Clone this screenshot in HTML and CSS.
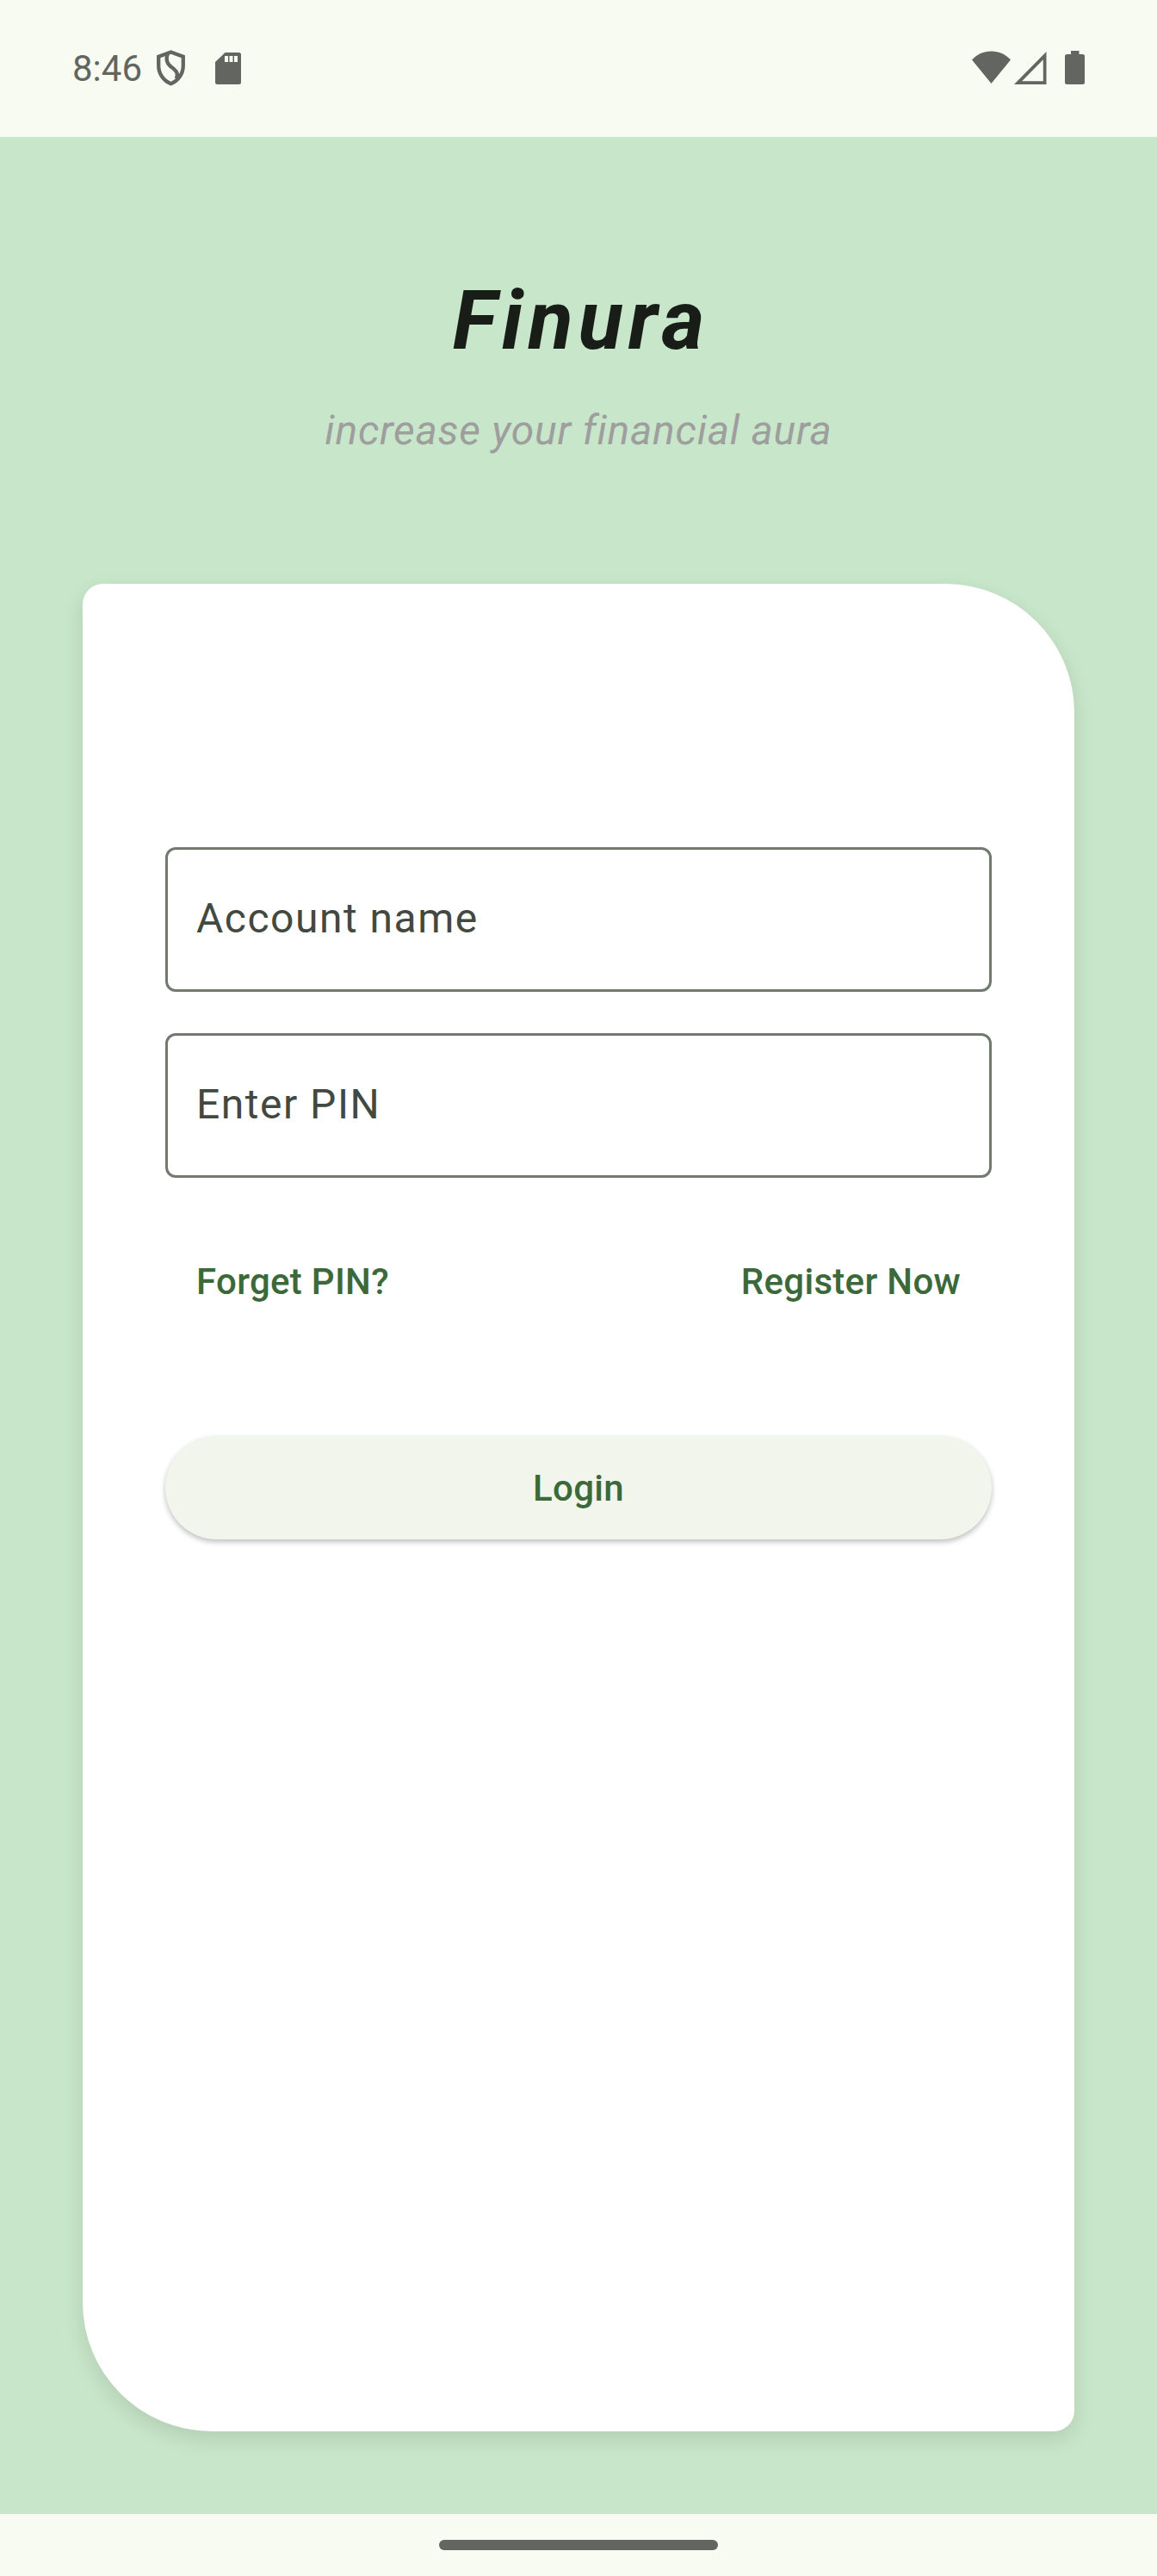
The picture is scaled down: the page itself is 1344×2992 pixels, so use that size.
FILE: index.html
```html
<!DOCTYPE html>
<html lang="en">
<head>
<meta charset="utf-8">
<title>Finura</title>
<link rel="stylesheet" href="styles.css">
</head>
<body>
<div class="screen">
  <header class="status-bar">
    <div class="status-left">
      <span class="clock">8:46</span>
      <svg class="icon-shield" width="33" height="42" viewBox="0 0 33 42" fill="none" stroke="currentColor" stroke-width="4.3">
        <path d="M16.5 2.5 30.800 7.800V18.500C30.800 27.500 25 36 16.500 39.200 8 36 2.200 27.500 2.200 18.500V7.800Z"/>
        <path d="M12.800 4.500C10.300 11 11.800 15.500 16 19 21 23 26.500 26.500 22.800 33.500"/>
      </svg>
      <svg class="icon-sd" width="30" height="37" viewBox="0 0 30 37" fill="currentColor">
        <path fill-rule="evenodd" d="M11.5 0H27.5Q30 0 30 2.5V34.500Q30 37 27.500 37H2.500Q0 37 0 34.500V11ZM11 4V11H15V4ZM16.500 4V11H20.500V4ZM22 4V11H26V4Z"/>
      </svg>
    </div>
    <div class="status-right">
      <svg width="45" height="38" viewBox="0 0 45 38" fill="currentColor">
        <path d="M0 10.500C6 4 13.500.500 22.500.500S39 4 45 10.500L22.500 38Z"/>
      </svg>
      <svg class="icon-signal" width="38" height="38" viewBox="0 0 38 38" fill="currentColor">
        <path fill-rule="evenodd" d="M37.500 0V38H0ZM33.800 9.300V34.300H9.100Z"/>
      </svg>
      <svg class="icon-battery" width="23" height="39" viewBox="0 0 23 39" fill="currentColor">
        <path d="M7 0H16.500V4H20.500Q23 4 23 6.500V36.500Q23 39 20.500 39H2.500Q0 39 0 36.500V6.500Q0 4 2.500 4H7Z"/>
      </svg>
    </div>
  </header>
  <main class="content">
    <h1 class="brand">Finura</h1>
    <p class="tagline">increase your financial aura</p>
    <form class="card">
      <input class="field" type="text" placeholder="Account name" aria-label="Account name">
      <input class="field" type="text" placeholder="Enter PIN" aria-label="Enter PIN">
      <div class="links">
        <a class="link">Forget PIN?</a>
        <a class="link">Register Now</a>
      </div>
      <button class="login" type="button">Login</button>
    </form>
  </main>
  <footer class="nav-bar"><div class="handle"></div></footer>
</div>
</body>
</html>
```
FILE: styles.css
```css
* {
  box-sizing: border-box;
}

body {
  margin: 0;
  font-family: Roboto, sans-serif;
}

.screen {
  display: flex;
  flex-direction: column;
  width: 1344px;
  height: 2992px;
  background: #f7fbf1;
}

.status-bar {
  display: flex;
  justify-content: space-between;
  height: 159px;
  padding: 59px 84px 0;
  color: #636660;
}

.status-left,
.status-right {
  display: flex;
  align-items: flex-start;
}

.clock {
  width: 98px;
  font-size: 42px;
  line-height: 42px;
}

.icon-shield {
  margin-top: -1px;
}

.icon-sd {
  margin: 2px 0 0 35px;
}

.icon-signal {
  margin: 1px 0 0 4px;
}

.icon-battery {
  margin-left: 21px;
}

.content {
  display: flex;
  flex-direction: column;
  flex: 1;
  padding: 156px 96px 96px;
  background: #c8e6c9;
  text-align: center;
}

.brand {
  margin: 0;
  padding-left: 6px;
  font-size: 96px;
  font-style: italic;
  font-weight: 700;
  letter-spacing: 6px;
  line-height: 114px;
  color: #181d17;
}

.tagline {
  margin: 43px 0 0;
  font-size: 48px;
  font-style: italic;
  letter-spacing: 0.75px;
  line-height: 56px;
  color: #9e9e9e;
}

.card {
  display: flex;
  flex-direction: column;
  flex: 1;
  margin-top: 150px;
  padding: 306px 96px 0;
  border-radius: 24px 150px 24px 150px;
  background: #fff;
  box-shadow: 0 9px 24px rgba(0, 0, 0, 0.11);
}

.field {
  width: 100%;
  height: 168px;
  margin: 0 0 48px;
  padding: 0 33px 3px;
  border: 3px solid #72796f;
  border-radius: 12px;
  background: none;
  font: 48px Roboto, sans-serif;
  letter-spacing: 1.5px;
}

.field::placeholder {
  color: #424940;
  opacity: 1;
}

.links {
  display: flex;
  justify-content: space-between;
  height: 144px;
  padding: 0 36px;
  font-size: 42px;
  font-weight: 500;
  letter-spacing: 0.3px;
  line-height: 146px;
  color: #3b6939;
}

.login {
  height: 120px;
  margin-top: 108px;
  padding: 0;
  border: 0;
  border-radius: 60px;
  background: #f1f5eb;
  box-shadow: 0 3px 6px rgba(0, 0, 0, 0.26);
  font: 500 42px Roboto, sans-serif;
  letter-spacing: 0.3px;
  color: #3b6939;
}

.nav-bar {
  height: 72px;
  padding-top: 30px;
}

.handle {
  width: 324px;
  height: 12px;
  margin: 0 auto;
  border-radius: 6px;
  background: #636660;
}
```
